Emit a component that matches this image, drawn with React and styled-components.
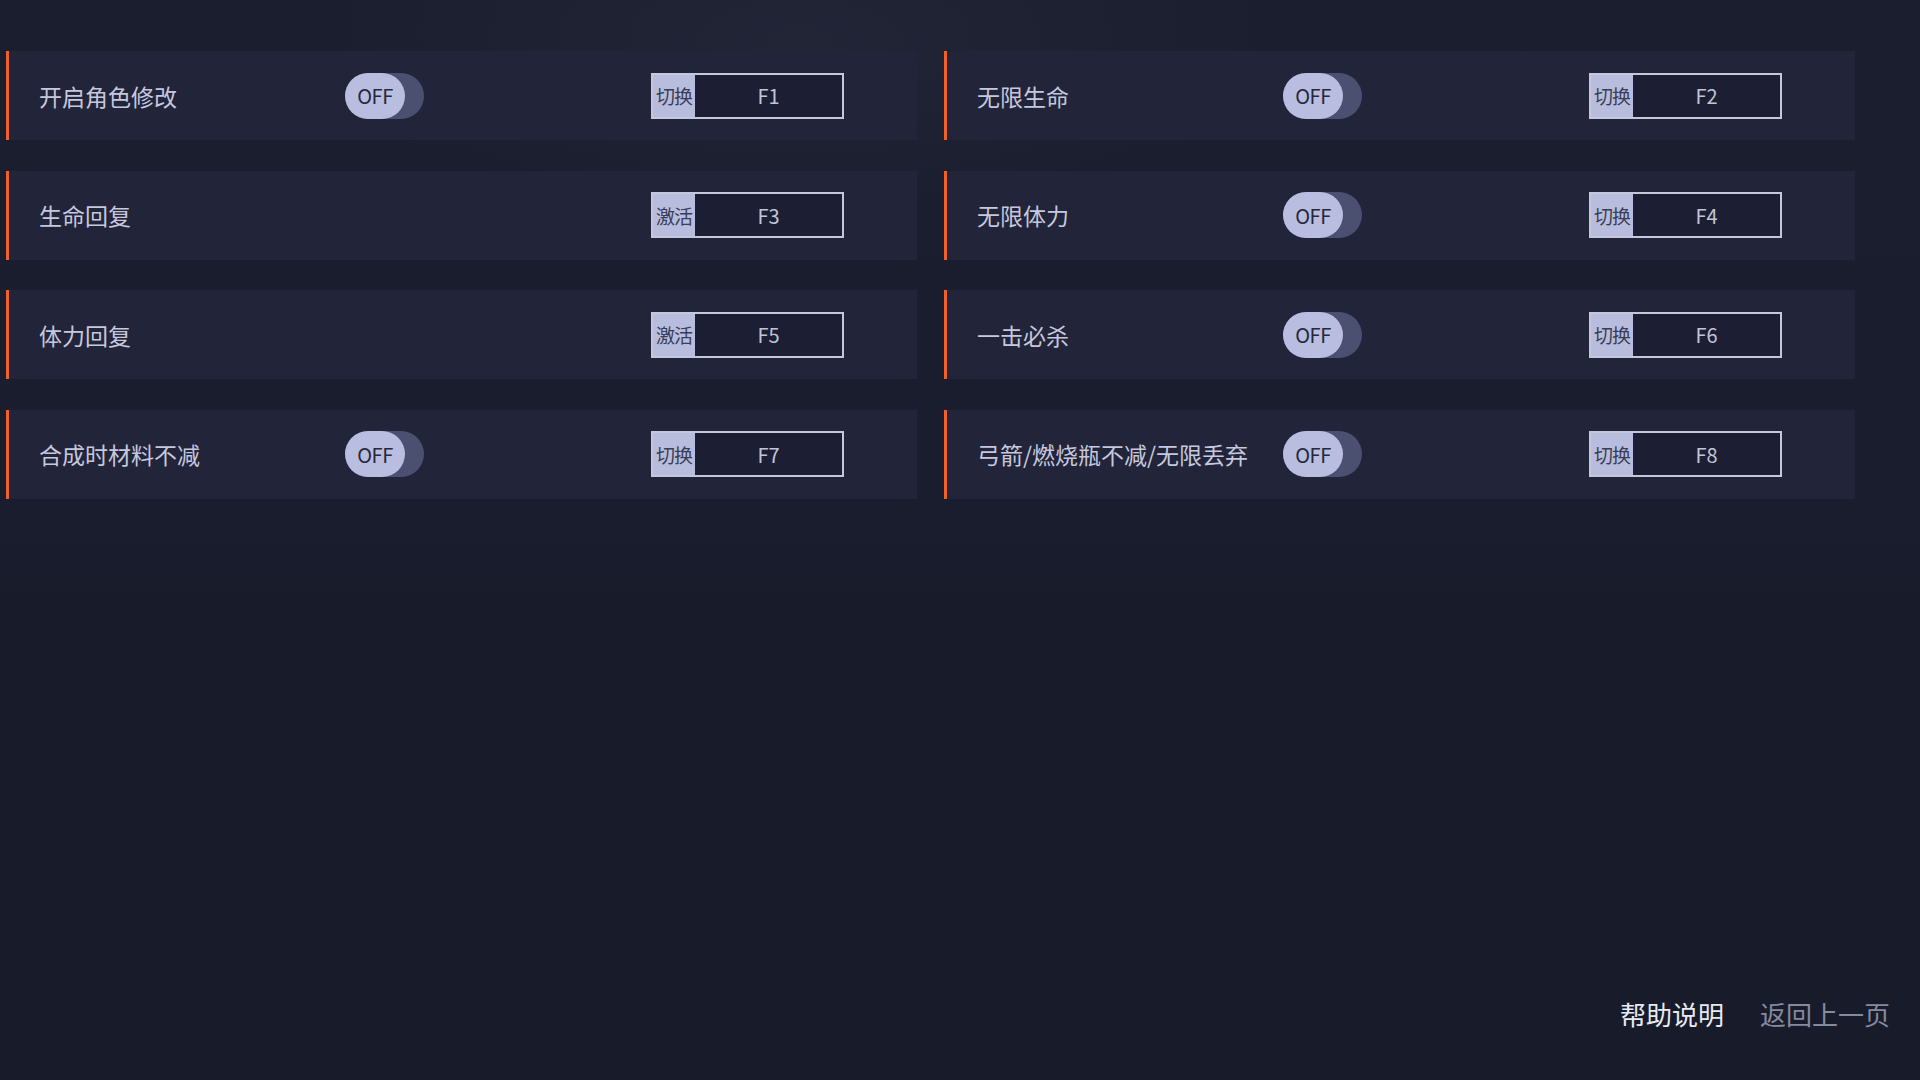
import React from "react";
import styled, { createGlobalStyle } from "styled-components";

const GlobalStyle = createGlobalStyle`
    html, body {
        margin: 0;
        padding: 0;
        background: #181b2a;
    }
    body {
        font-family: "Noto Sans CJK SC", "Noto Sans", sans-serif;
    }
`;

const cheats = [
    { label: "开启角色修改", toggle: true, mode: "切换", key: "F1" },
    { label: "无限生命", toggle: true, mode: "切换", key: "F2" },
    { label: "生命回复", toggle: false, mode: "激活", key: "F3" },
    { label: "无限体力", toggle: true, mode: "切换", key: "F4" },
    { label: "体力回复", toggle: false, mode: "激活", key: "F5" },
    { label: "一击必杀", toggle: true, mode: "切换", key: "F6" },
    { label: "合成时材料不减", toggle: true, mode: "切换", key: "F7" },
    { label: "弓箭/燃烧瓶不减/无限丢弃", toggle: true, mode: "切换", key: "F8" },
];

export default function App() {
    return (
        <>
            <GlobalStyle />
            <Page>
                <Grid>
                    {cheats.map((c) => (
                        <Card key={c.key}>
                            <Label>{c.label}</Label>
                            <div>
                                {c.toggle && (
                                    <Toggle>
                                        <Knob>OFF</Knob>
                                    </Toggle>
                                )}
                            </div>
                            <KeyBox>
                                <Mode>{c.mode}</Mode>
                                <Hotkey>{c.key}</Hotkey>
                            </KeyBox>
                        </Card>
                    ))}
                </Grid>
                <Footer>
                    <FooterLink $active>帮助说明</FooterLink>
                    <FooterLink>返回上一页</FooterLink>
                </Footer>
            </Page>
        </>
    );
}

const Page = styled.div`
    min-height: 100vh;
    box-sizing: border-box;
    display: flex;
    flex-direction: column;
    padding: 51px 65px 0 6px;
    background:
        radial-gradient(ellipse 700px 260px at 800px 40px, rgba(40, 44, 62, 0.5), transparent 70%),
        linear-gradient(180deg, #1b1e2f 0px, #1a1d2d 520px, #181b2a 620px);
`;

const Grid = styled.div`
    display: grid;
    grid-template-columns: 911px 911px;
    column-gap: 27px;
    row-gap: 30.5px;
`;

const Card = styled.div`
    height: 89px;
    box-sizing: border-box;
    background: #22253a;
    border-left: 3px solid #f0612a;
    padding-left: 30px;
    display: grid;
    grid-template-columns: 306px 306px 193px;
    align-items: center;
`;

const Label = styled.span`
    color: #c6c8de;
    font-size: 23px;
    white-space: nowrap;
`;

const Toggle = styled.div`
    width: 79px;
    height: 46px;
    border-radius: 23px;
    background: #4b5070;
    display: flex;
    align-items: center;
`;

const Knob = styled.div`
    width: 60px;
    height: 46px;
    border-radius: 23px;
    background: #b9bddf;
    color: #262939;
    font-size: 20px;
    letter-spacing: -0.5px;
    display: flex;
    align-items: center;
    justify-content: center;
`;

const KeyBox = styled.div`
    width: 193px;
    height: 46px;
    box-sizing: border-box;
    border: 2px solid #c5c8da;
    display: flex;
    background: #1c1f34;
`;

const Mode = styled.span`
    width: 42px;
    background: #b9bddd;
    color: #3a3d55;
    font-size: 19px;
    display: flex;
    align-items: center;
    justify-content: center;
    letter-spacing: -1px;
`;

const Hotkey = styled.span`
    flex: 1;
    color: #c2c4d6;
    font-size: 20px;
    display: flex;
    align-items: center;
    justify-content: center;
`;

const Footer = styled.div`
    margin-top: auto;
    display: flex;
    justify-content: flex-end;
    gap: 36px;
    padding-bottom: 49px;
    margin-right: -35px;
`;

const FooterLink = styled.span`
    font-size: 26px;
    line-height: 34px;
    color: ${(p) => (p.$active ? "#e8eaf2" : "#868aa0")};
    cursor: pointer;
`;
